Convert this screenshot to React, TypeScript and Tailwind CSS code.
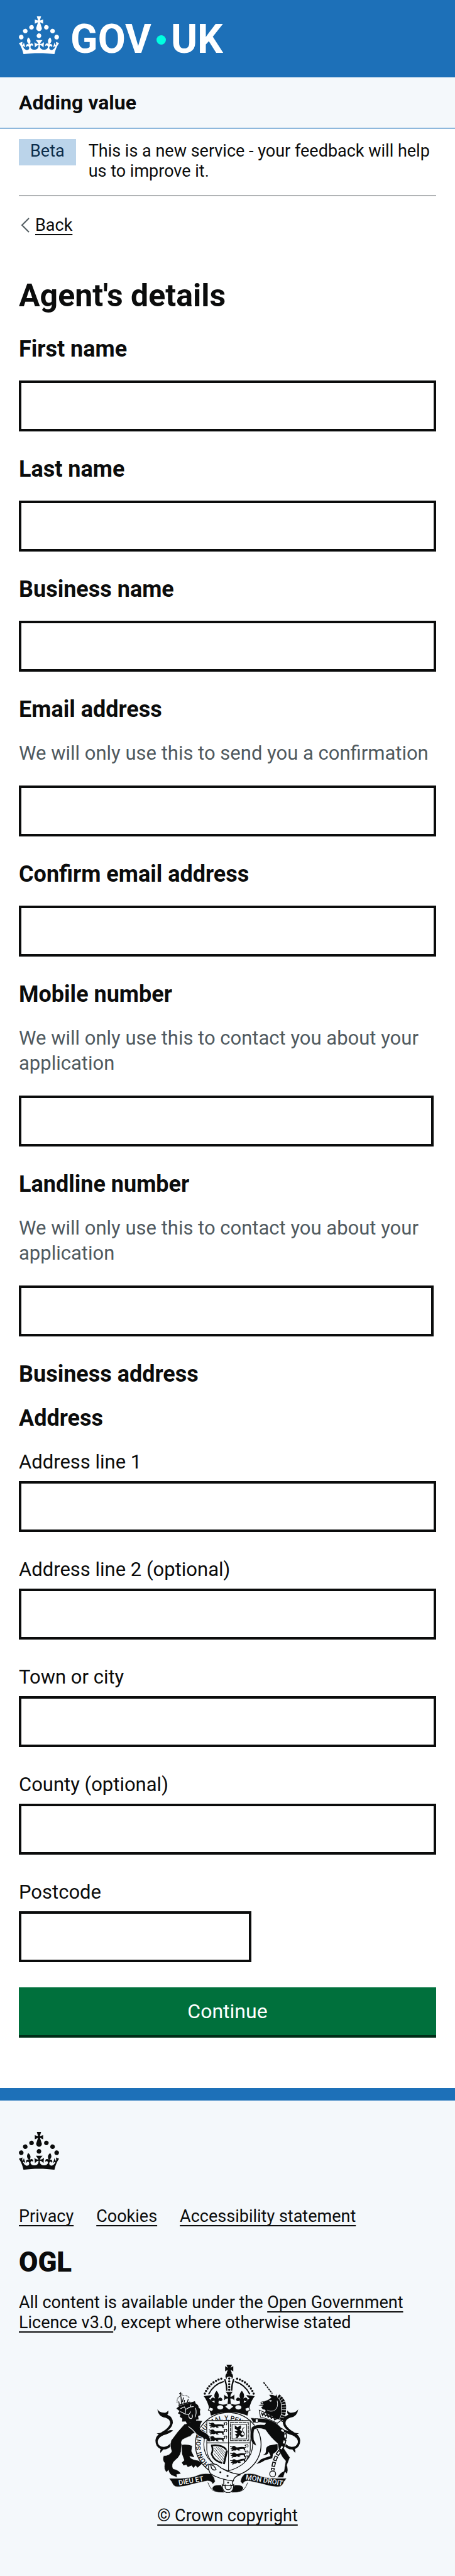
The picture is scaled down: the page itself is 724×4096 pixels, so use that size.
import type { ReactNode } from "react";

const CROWN_PATH =
  "M22.6 10.4c-1 .4-2-.1-2.4-1-.4-.9.1-2 1-2.4.9-.4 2 .1 2.4 1s-.1 2-1 2.4m-5.9 6.7c-.9.4-2-.1-2.4-1-.4-.9.1-2 1-2.4.9-.4 2 .1 2.4 1s-.1 2-1 2.4m10.8-3.7c-1 .4-2-.1-2.4-1-.4-.9.1-2 1-2.4.9-.4 2 .1 2.4 1s0 2-1 2.4m3.3 4.8c-1 .4-2-.1-2.4-1-.4-.9.1-2 1-2.4.9-.4 2 .1 2.4 1s-.1 2-1 2.4M17 4.7l2.3 1.2V2.5l-2.3.7-.2-.2.9-3h-3.4l.9 3-.2.2c-.1.1-2.3-.7-2.3-.7v3.4L15 4.7c.1.1.1.2.2.2l-1.3 4c-.1.2-.1.4-.1.6 0 1.1.8 2 1.9 2.2h.7c1-.2 1.9-1.1 1.9-2.1 0-.2 0-.4-.1-.6l-1.3-4c-.1-.2 0-.2.1-.3m-7.6 5.7c.9.4 2-.1 2.4-1 .4-.9-.1-2-1-2.4-.9-.4-2 .1-2.4 1s0 2 1 2.4m-5 3c.9.4 2-.1 2.4-1 .4-.9-.1-2-1-2.4-.9-.4-2 .1-2.4 1s.1 2 1 2.4m-3.2 4.8c.9.4 2-.1 2.4-1 .4-.9-.1-2-1-2.4-.9-.4-2 .1-2.4 1s0 2 1 2.4m14.8 11c4.4 0 8.6.3 12.3.8 1.1-4.5 2.4-7 3.7-8.8l-2.5-.9c.2 1.3.3 1.9 0 2.7-.4-.4-.8-1.1-1.1-2.3l-1.2 4c.7-.5 1.3-.8 2-.9-1.1 2.5-2.6 3.1-3.5 3-1.1-.2-1.7-1.2-1.5-2.1.3-1.2 1.5-1.5 2.1-.1 1.1-2.3-.8-3-2-2.3 1.9-1.9 2.1-3.5.6-5.6-2.1 1.6-2.1 3.2-1.2 5.5-1.2-1.4-3.2-.6-2.5 1.6.9-1.4 2.1-.5 1.9.8-.2 1.1-1.7 2.1-3.5 1.9-2.7-.2-2.9-2.1-2.9-3.6.7-.1 1.9.5 2.9 1.9l.4-4.3c-1.1 1.1-2.1 1.4-3.2 1.4.4-1.2 2.1-3 2.1-3h-5.4s1.7 1.9 2.1 3c-1.1 0-2.1-.2-3.2-1.4l.4 4.3c1-1.4 2.2-2 2.9-1.9-.1 1.5-.2 3.4-2.9 3.6-1.9.2-3.4-.8-3.5-1.9-.2-1.3 1-2.2 1.9-.8.7-2.3-1.2-3-2.5-1.6.9-2.2.9-3.9-1.2-5.5-1.5 2-1.3 3.7.6 5.6-1.2-.7-3.1 0-2 2.3.6-1.4 1.8-1.1 2.1.1.2.9-.3 1.9-1.5 2.1-.9.2-2.4-.5-3.5-3 .6 0 1.2.3 2 .9l-1.2-4c-.3 1.1-.7 1.9-1.1 2.3-.3-.8-.2-1.4 0-2.7l-2.9.9C1.3 23 2.6 25.5 3.7 30c3.7-.5 7.9-.8 12.3-.8";

function Crown() {
  return (
    <svg viewBox="0 0 32 30" className="h-[60px] w-16 shrink-0" fill="currentColor" aria-hidden="true">
      <path fillRule="evenodd" clipRule="evenodd" d={CROWN_PATH} />
    </svg>
  );
}

/* One passant lion, about 130 by 38 units, drawn from its top left corner. */
function Passant({ x, y, tilt = 0 }: { x: number; y: number; tilt?: number }) {
  return (
    <g transform={`translate(${x} ${y}) rotate(${tilt})`}>
      <path d="M12 6Q26-6 38 6Q42 16 60 12Q80 10 98 14Q108 18 104 30L110 38H98L94 26Q76 24 62 28L72 36H56L46 28Q38 38 26 32L8 36L10 28L22 26L6 22L0 16L14 16Z" />
      <path d="M98 18Q120 18 112 6Q98 0 126-1Q132 8 124 18" fill="none" stroke="currentColor" strokeWidth="5" />
      <path d="M0 2L14 8" stroke="currentColor" strokeWidth="5" />
    </g>
  );
}

const TAIL =
  "M98 402Q112 425 150 427Q162 428 175 410Q180 430 168 440Q210 456 208 500Q200 538 165 558Q190 545 210 552Q185 575 140 587Q100 605 100 635Q105 668 145 670Q172 668 195 640L202 655Q175 690 140 688L120 712Q116 695 122 685Q84 670 84 625Q86 595 108 580L92 572Q120 575 135 560Q172 540 188 508Q194 474 155 462Q105 455 98 402Z";

const RIBBON =
  "M180 893Q340 900 400 865Q440 857 480 861Q508 885 510 915Q502 930 490 935Q490 914 455 912Q390 924 300 948Q250 957 225 952Q205 940 200 920Z";

const ARCH = (
  <>
    <path d="M578 188Q592 225 593 270" strokeWidth="10" />
    <path d="M463 295Q498 225 571 204" strokeWidth="9" />
    <path d="M436 290Q472 205 560 182" strokeWidth="16" strokeLinecap="round" strokeDasharray="0 20.5" />
  </>
);

const FLEUR =
  "M520 270Q546 300 530 325Q555 308 562 334Q552 352 536 338L532 362H508L504 338Q488 352 478 334Q485 308 510 325Q494 300 520 270Z";

function CoatOfArms() {
  return (
    <svg
      viewBox="84 84 1032 914"
      className="h-[204px] w-[231px] text-[#0b0c0c]"
      fill="currentColor"
      aria-hidden="true"
    >
      {/* tails */}
      <path d={TAIL} />
      <path d={TAIL} transform="translate(1200 0) scale(-1 1)" />

      {/* garter */}
      <ellipse cx="603" cy="652" rx="234" ry="227" fill="#f4f8fb" stroke="currentColor" strokeWidth="6" />
      <ellipse cx="603" cy="652" rx="174" ry="172" fill="#f4f8fb" stroke="currentColor" strokeWidth="5" />
      <path id="garter-motto" d="M467 795A186 182 0 1 1 700 808" fill="none" />
      <text className="font-[Roboto]" fontSize="46" fontWeight="500">
        <textPath href="#garter-motto">HONI SOIT QUI MAL Y PENSE</textPath>
      </text>

      {/* shield */}
      <path
        d="M450 482H760V690Q752 800 605 840Q458 800 450 690Z"
        fill="#f4f8fb"
        stroke="currentColor"
        strokeWidth="5"
      />
      <path d="M605 482V840M450 641H760" stroke="currentColor" strokeWidth="5" fill="none" />
      <Passant x={465} y={497} />
      <Passant x={465} y={545} />
      <Passant x={465} y={593} />
      <Passant x={616} y={664} tilt={-4} />
      <Passant x={616} y={712} tilt={-6} />
      <Passant x={616} y={764} tilt={-14} />
      <g fill="none" stroke="currentColor">
        <rect x="618" y="497" width="128" height="128" strokeWidth="5" strokeDasharray="26 4" />
        <rect x="630" y="509" width="104" height="104" strokeWidth="4" />
      </g>
      <path d="M650 515L668 530L692 516Q700 535 684 548L704 560L694 578L712 590L700 600L682 586L672 606H654L664 592L650 584L668 574L648 560L670 552L650 540Z" />
      <path d="M706 596Q728 580 708 560Q696 540 718 532" fill="none" stroke="currentColor" strokeWidth="5" />
      <g fill="none" stroke="currentColor">
        <path d="M590 690Q560 650 480 660M486 662Q498 690 484 720Q500 770 560 785" strokeWidth="12" />
        <path d="M594 695L572 792" strokeWidth="14" />
        <path
          d="M505 678L574 762M518 672L578 744M532 672L582 730M546 674L586 716M502 694L568 774M500 716L556 780"
          strokeWidth="3.5"
        />
      </g>

      {/* large crown */}
      <path d="M590 84H630L620 106L639 94V132L620 120L628 142H592L600 120L581 132V94L600 106Z" />
      <circle cx="610" cy="166" r="27" />
      <path d="M592 176Q610 160 628 176L622 270H598Z" fill="#f4f8fb" />
      <path d="M610 183V265" fill="none" stroke="currentColor" strokeWidth="16" strokeLinecap="round" strokeDasharray="0 20" />
      <g fill="none" stroke="currentColor">
        {ARCH}
        <g transform="translate(1220 0) scale(-1 1)">{ARCH}</g>
      </g>
      <path d="M428 308L488 300Q480 318 466 324L490 346Q508 362 525 350Q535 370 570 368Q604 366 610 345Q616 366 650 368Q685 370 695 350Q712 362 730 346L754 324Q740 318 732 300L792 308Q762 345 752 400L740 447Q610 398 480 447L468 400Q458 345 428 308Z" />
      <path d={FLEUR} />
      <path d={FLEUR} transform="translate(1220 0) scale(-1 1)" />
      <path
        d="M582 276H638Q620 296 620 310Q636 310 648 292V342Q636 326 620 326L624 368H596L600 326Q584 326 572 342V292Q584 310 600 310Q600 296 582 276Z"
        stroke="#f4f8fb"
        strokeWidth="4"
      />
      <path d="M582 383L610 362L638 383L610 404Z" fill="#f4f8fb" />
      <ellipse cx="546" cy="388" rx="22" ry="15" fill="#f4f8fb" />
      <ellipse cx="675" cy="388" rx="22" ry="15" fill="#f4f8fb" />
      <g fill="#f4f8fb" stroke="currentColor" strokeWidth="5">
        <path d="M461 408L472 386L500 396L488 418Z" />
        <path d="M759 408L748 386L720 396L732 418Z" />
      </g>

      {/* lion */}
      <path d="M270 655Q310 650 345 662L340 700L361 744L326 735Q332 758 375 765Q402 768 415 790L385 818L370 802L355 820L342 802L315 813L304 796L285 802L272 782L290 765L274 720Z" />
      <path
        d="M290 508Q240 560 195 625Q185 670 200 700Q190 730 142 733Q130 765 150 785Q140 835 165 850L176 835Q185 872 215 878L240 888L236 866L266 862Q256 835 210 825Q195 790 225 765Q272 730 268 680L272 655Q262 635 277 618Q310 600 335 592Q350 566 372 574Q400 600 422 604L430 620L445 612L455 630L474 632Q480 592 442 570Q415 558 404 545Q395 520 420 484L380 480L320 500Z"
        stroke="#f4f8fb"
        strokeWidth="3"
      />
      <path d="M233 396L255 378L365 344L372 362Q392 370 392 390L404 400Q398 418 404 444L388 450L392 474L374 476L376 505L356 492L346 514L330 496L314 516L300 488L274 490L276 468L258 455L262 440L244 430L256 414Z" />
      <g fill="none" stroke="#f4f8fb" strokeWidth="5">
        <path d="M262 398L290 384L300 402L330 386L356 382M300 402L296 436L322 440L336 418M262 418L296 436M322 440Q320 470 340 468Q352 460 346 440M370 392Q380 430 366 458M330 386L338 368M320 524Q350 545 372 574" />
      </g>
      <g fill="none" stroke="currentColor">
        <path d="M248 374L332 350" strokeWidth="8" />
        <path d="M238 355Q236 315 264 308Q300 292 328 322" strokeWidth="6" strokeDasharray="4 4" />
        <path d="M254 366L250 345M270 362L266 310M288 356L292 335M312 350L318 330M276 350L284 318" strokeWidth="6" />
        <path d="M264 280V308M253 290L277 294" strokeWidth="6" />
      </g>

      {/* unicorn */}
      <path d="M855 210L917 290" fill="none" stroke="currentColor" strokeWidth="8" strokeDasharray="14 5" />
      <path
        d="M958 308Q1006 340 1000 400Q1000 440 978 486"
        fill="none"
        stroke="currentColor"
        strokeWidth="30"
        strokeDasharray="15 4"
      />
      <path
        d="M892 298Q925 292 938 308L945 292L956 318Q988 350 982 395Q990 440 962 480L862 424Q878 402 850 404L836 388L850 378L816 376L830 368L855 366Q832 372 832 355Q835 342 860 344Q900 330 908 318Z"
        stroke="#f4f8fb"
        strokeWidth="3"
      />
      <circle cx="845" cy="355" r="5" fill="#f4f8fb" />
      <path d="M893 342Q903 332 916 342Q906 352 893 342Z" fill="#f4f8fb" />
      <path d="M952 340Q964 390 930 412Q900 420 882 408" fill="none" stroke="#f4f8fb" strokeWidth="4" />
      <path d="M955 648L895 660Q868 670 872 700Q870 722 850 726Q884 732 892 704L905 735Q870 745 836 758L804 792Q840 782 862 766L917 750L922 720Q945 706 955 690Z" />
      <path
        d="M762 462Q800 468 830 466Q880 465 930 492Q985 520 1012 590Q1022 650 1000 680L1043 745L1022 800Q1035 840 1020 862L1008 848L996 888L952 888Q970 855 1000 842L1012 770Q962 720 955 645Q910 610 868 548Q820 530 790 545Q782 560 786 620Q800 640 804 662Q766 650 760 600Q758 560 770 530Q800 505 862 512L870 500L830 495Q800 490 782 500Z"
        stroke="#f4f8fb"
        strokeWidth="3"
      />
      <path d="M824 408L833 458Q900 470 952 502L986 476Q900 462 868 426Z" fill="#f4f8fb" stroke="currentColor" strokeWidth="5" />
      <path d="M840 425L848 445L858 430L868 450L880 440L888 458L902 446L910 466L926 456L934 476L952 468" fill="none" stroke="currentColor" strokeWidth="8" />
      <g fill="none" strokeLinejoin="round">
        <path d="M975 545Q1015 560 1008 605Q1000 660 950 730Q925 780 920 838" stroke="currentColor" strokeWidth="26" strokeDasharray="36 8" />
        <path d="M975 545Q1015 560 1008 605Q1000 660 950 730Q925 780 920 838" stroke="#f4f8fb" strokeWidth="12" strokeDasharray="22 22" strokeDashoffset="-7" />
        <circle cx="920" cy="862" r="21" stroke="currentColor" strokeWidth="6" fill="#f4f8fb" />
        <rect x="796" y="470" width="20" height="24" stroke="currentColor" strokeWidth="5" fill="#f4f8fb" />
      </g>

      {/* ribbon */}
      <g stroke="#f4f8fb" strokeWidth="3">
        <path d={RIBBON} />
        <path d={RIBBON} transform="translate(1200 0) scale(-1 1)" />
      </g>
      <path d="M490 965Q492 938 552 942L572 992Q500 992 490 965ZM710 965Q708 938 648 942L628 992Q700 992 710 965Z" />
      <path d="M458 924Q482 985 512 986Q540 993 572 992M742 924Q718 985 688 986Q660 993 628 992" fill="none" stroke="currentColor" strokeWidth="4" />
      <g className="font-[Roboto]" fill="#f4f8fb" fontSize="50" fontWeight="500">
        <text x="252" y="943" transform="rotate(-10 252 943)">DIEU ET</text>
        <text x="726" y="900" transform="rotate(10 726 900)">MON DROIT</text>
      </g>

      {/* belt and buckle */}
      <g fill="#f4f8fb" stroke="currentColor" strokeWidth="6">
        <path d="M571 895V945H632V895" />
        <path d="M560 938Q560 996 602 996Q642 996 642 938Q630 950 622 942Q630 975 602 975Q576 975 582 942Q570 950 560 938Z" />
        <path d="M464 800Q472 785 520 795Q580 850 690 868Q640 880 640 912Q540 902 476 860Q458 830 464 800Z" />
        <path d="M478 800Q500 795 516 830Q500 842 484 822Z" />
      </g>
      <circle cx="547" cy="850" r="7" />
      <circle cx="598" cy="876" r="7" />
      <circle cx="602" cy="924" r="6" />
    </svg>
  );
}

const LINK = "underline decoration-2 underline-offset-[5px] [text-decoration-skip-ink:none]";

function TextInput({ id, className = "w-full" }: { id: string; className?: string }) {
  return (
    <input
      id={id}
      name={id}
      type="text"
      className={`block h-[81px] rounded-none border-4 border-[#0b0c0c] bg-white px-2 text-[31px] leading-10 ${className}`}
    />
  );
}

function Field({ id, label, hint, className }: { id: string; label: string; hint?: string; className?: string }) {
  return (
    <div className="flex flex-col gap-[30px]">
      <label htmlFor={id} className="text-[36px] leading-10 font-bold">
        {label}
      </label>
      {hint && <p className="mb-px text-[31px] leading-10 text-[#505a5f]">{hint}</p>}
      <TextInput id={id} className={className} />
    </div>
  );
}

function AddressField({ id, label, className }: { id: string; label: string; className?: string }) {
  return (
    <div className="flex flex-col gap-2.5">
      <label htmlFor={id} className="text-[31px] leading-10">
        {label}
      </label>
      <TextInput id={id} className={className} />
    </div>
  );
}

function FooterLink({ children }: { children: ReactNode }) {
  return (
    <a href="#" className={LINK}>
      {children}
    </a>
  );
}

export default function App() {
  return (
    <div className="bg-white font-[Roboto,'Liberation_Sans',sans-serif] text-[#0b0c0c]">
      <header>
        <div className="flex h-[123px] bg-[#1d70b8] px-[30px] pt-[26px] text-white">
          <a href="#" aria-label="GOV.UK" className="flex h-[60px] items-start gap-[18px]">
            <Crown />
            <span className="flex items-center gap-2 text-[64px] leading-[74px] font-bold">
              GOV
              <span className="size-[15px] rounded-full bg-[#00ffe0]" />
              UK
            </span>
          </a>
        </div>
        <div className="border-b-2 border-[#8eb8dc] bg-[#f4f8fb] px-[30px] py-5">
          <a href="#" className="block text-[32px] leading-10 font-bold">
            Adding value
          </a>
        </div>
      </header>

      <div className="px-[30px] pt-4">
        <div className="flex items-start gap-5 border-b-2 border-[#b1b4b6] pb-[22px]">
          <strong className="bg-[#bbd4ea] px-[18px] pt-[3px] pb-[7px] text-[27px] leading-8 font-normal text-[#0c2d4a]">
            Beta
          </strong>
          <p className="pt-[3px] text-[27px] leading-8">
            This is a new service - your feedback will help us to improve it.
          </p>
        </div>

        <a href="#" className="mt-[30px] flex w-fit items-center gap-2 text-[27px] leading-8">
          <svg viewBox="0 0 16 24" className="ml-0.5 h-6 w-4" fill="none" stroke="#505a5f" strokeWidth="2" aria-hidden="true">
            <path d="M14 1L3 12L14 23" />
          </svg>
          <span className={LINK}>Back</span>
        </a>

        <main>
          <h1 className="mt-[71px] text-[50px] leading-[50px] font-bold">Agent's details</h1>
          <form className="mt-10 mb-20">
            <div className="flex flex-col gap-10">
              <Field id="first-name" label="First name" />
              <Field id="last-name" label="Last name" />
              <Field id="business-name" label="Business name" />
              <Field id="email" label="Email address" hint="We will only use this to send you a confirmation" />
              <Field id="confirm-email" label="Confirm email address" />
              <Field
                id="mobile"
                label="Mobile number"
                hint="We will only use this to contact you about your application"
                className="w-full max-w-[660px]"
              />
              <Field
                id="landline"
                label="Landline number"
                hint="We will only use this to contact you about your application"
                className="w-full max-w-[660px]"
              />
              <h2 className="-mb-2.5 text-[36px] leading-10 font-bold">Business address</h2>
              <fieldset className="flex flex-col">
                <legend className="mb-[30px] text-[36px] leading-10 font-bold">Address</legend>
                <div className="flex flex-col gap-10">
                  <AddressField id="address-line-1" label="Address line 1" />
                  <AddressField id="address-line-2" label="Address line 2 (optional)" />
                  <AddressField id="town" label="Town or city" />
                  <AddressField id="county" label="County (optional)" />
                  <AddressField id="postcode" label="Postcode" className="w-full max-w-[370px]" />
                </div>
              </fieldset>
              <button
                type="button"
                className="h-20 w-full border-b-4 border-[#002d18] bg-[#00703c] text-[32px] leading-10 text-white"
              >
                Continue
              </button>
            </div>
          </form>
        </main>
      </div>

      <footer className="border-t-20 border-[#1d70b8] bg-[#f4f8fb] px-[30px] pt-[50px] pb-20 text-[27px] leading-8">
        <Crown />
        <ul className="mt-[58px] flex flex-wrap gap-x-9">
          <li>
            <FooterLink>Privacy</FooterLink>
          </li>
          <li>
            <FooterLink>Cookies</FooterLink>
          </li>
          <li>
            <FooterLink>Accessibility statement</FooterLink>
          </li>
        </ul>
        <div className="mt-10 text-[44px] leading-[35px] font-black">OGL</div>
        <p className="mt-[30px]">
          All content is available under the <FooterLink>Open Government Licence v3.0</FooterLink>, except where
          otherwise stated
        </p>
        <a href="#" className="mx-auto mt-[51px] flex w-fit flex-col items-center gap-5">
          <CoatOfArms />
          <span className={LINK}>© Crown copyright</span>
        </a>
      </footer>
    </div>
  );
}
